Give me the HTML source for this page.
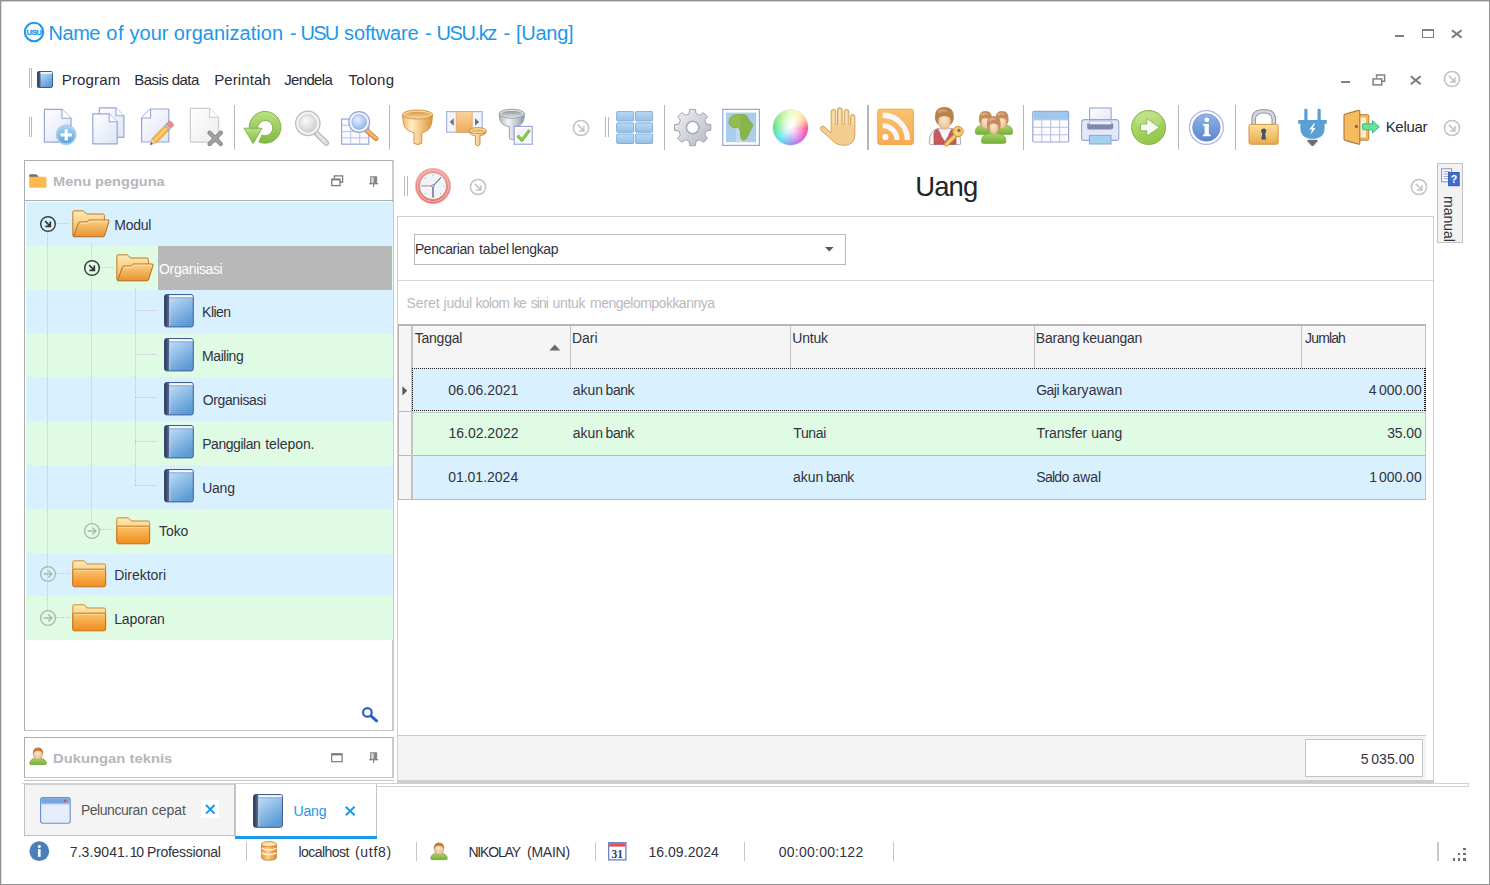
<!DOCTYPE html>
<html><head><meta charset="utf-8"><title>USU</title><style>
html,body{margin:0;padding:0}
body{width:1490px;height:885px;position:relative;overflow:hidden;background:#fff;font-family:"Liberation Sans",sans-serif}
body>div,body>svg,body>span{position:absolute;box-sizing:border-box}
.t{white-space:pre;line-height:1}
svg{overflow:visible}
</style></head>
<body>
<div style="left:0px;top:0px;width:1490px;height:885px;border:1px solid #929292;"></div>
<div style="left:1px;top:1px;width:1488px;height:1px;background:rgba(140,140,140,0.4);"></div>
<div style="left:1px;top:1px;width:1px;height:883px;background:rgba(140,140,140,0.25);"></div>
<span class="t" style="left:48.60px;top:22.60px;font-size:20px;color:#1c97ea;letter-spacing:-0.503px;">Name</span>
<span class="t" style="left:106.20px;top:22.60px;font-size:20px;color:#1c97ea;letter-spacing:0.792px;">of</span>
<span class="t" style="left:129.60px;top:22.60px;font-size:20px;color:#1c97ea;letter-spacing:-0.033px;">your</span>
<span class="t" style="left:173.80px;top:22.60px;font-size:20px;color:#1c97ea;letter-spacing:0.027px;">organization</span>
<span class="t" style="left:289.90px;top:22.60px;font-size:20px;color:#1c97ea;">-</span>
<span class="t" style="left:300.40px;top:22.60px;font-size:20px;color:#1c97ea;letter-spacing:-1.653px;">USU</span>
<span class="t" style="left:344.10px;top:22.60px;font-size:20px;color:#1c97ea;letter-spacing:-0.144px;">software</span>
<span class="t" style="left:424.90px;top:22.60px;font-size:20px;color:#1c97ea;">-</span>
<span class="t" style="left:436.40px;top:22.60px;font-size:20px;color:#1c97ea;letter-spacing:-1.382px;">USU.kz</span>
<span class="t" style="left:503.40px;top:22.60px;font-size:20px;color:#1c97ea;">-</span>
<span class="t" style="left:516.00px;top:22.60px;font-size:20px;color:#1c97ea;letter-spacing:-0.262px;">[Uang]</span>
<svg style="left:23px;top:21.4px;" width="22" height="22" viewBox="0 0 22 22"><circle cx="11" cy="11" r="9.2" fill="none" stroke="#1c97ea" stroke-width="2.1"/><text x="11" y="13.6" font-family="Liberation Sans" font-weight="bold" font-size="7.8" fill="#1c97ea" stroke="#1c97ea" stroke-width="0.3" text-anchor="middle" letter-spacing="-0.5">USU</text></svg>
<div style="left:1395px;top:35px;width:9px;height:2.4px;background:#808080;"></div>
<div style="left:1422.4px;top:28.8px;width:12px;height:9px;border:1px solid #808080;border-top-width:2.4px;"></div>
<svg style="left:1451px;top:28.5px;" width="12" height="10" viewBox="0 0 12 10"><path d="M1 1.2 L10.6 8.6 M10.6 1.2 L1 8.6" stroke="#7c7c7c" stroke-width="2" fill="none"/></svg>
<div style="left:29px;top:68px;width:1px;height:20px;background:#b9b9b9;"></div>
<div style="left:31.3px;top:68px;width:1px;height:20px;background:#b9b9b9;"></div>
<span class="t" style="left:61.80px;top:71.70px;font-size:15px;color:#2a2a33;letter-spacing:0.157px;">Program</span>
<span class="t" style="left:134.20px;top:71.70px;font-size:15px;color:#2a2a33;letter-spacing:-0.550px;">Basis data</span>
<span class="t" style="left:214.20px;top:71.70px;font-size:15px;color:#2a2a33;letter-spacing:0.085px;">Perintah</span>
<span class="t" style="left:284.17px;top:71.70px;font-size:15px;color:#2a2a33;letter-spacing:-0.646px;">Jendela</span>
<span class="t" style="left:348.60px;top:71.70px;font-size:15px;color:#2a2a33;letter-spacing:0.240px;">Tolong</span>
<div style="left:1341.4px;top:81px;width:8.6px;height:2.4px;background:#808080;"></div>
<svg style="left:1372px;top:73.5px;" width="14" height="12" viewBox="0 0 14 12"><path d="M4.6 3.8 V1.1 H12.6 V7.2 H9.8" fill="none" stroke="#808080" stroke-width="1.5"/><rect x="1.1" y="4.9" width="8.6" height="6" fill="none" stroke="#808080" stroke-width="1.5"/></svg>
<svg style="left:1410px;top:74.5px;" width="12" height="10" viewBox="0 0 12 10"><path d="M0.8 1.2 L10.6 9.2 M10.6 1.2 L0.8 9.2" stroke="#7c7c7c" stroke-width="2" fill="none"/></svg>
<svg style="left:1442.7px;top:70.2px;" width="18" height="18" viewBox="0 0 18 18"><circle cx="9" cy="9" r="7.6" fill="#fff" stroke="#c2c2c2" stroke-width="1.5"/><path d="M5.8 5.8 L11.6 11.6 M11.9 7 V11.9 H7" fill="none" stroke="#c2c2c2" stroke-width="1.5"/></svg>
<svg style="left:1442.7px;top:118.8px;" width="18" height="18" viewBox="0 0 18 18"><circle cx="9" cy="9" r="7.6" fill="#fff" stroke="#c2c2c2" stroke-width="1.5"/><path d="M5.8 5.8 L11.6 11.6 M11.9 7 V11.9 H7" fill="none" stroke="#c2c2c2" stroke-width="1.5"/></svg>
<svg style="left:571.8px;top:118.6px;" width="18" height="18" viewBox="0 0 18 18"><circle cx="9" cy="9" r="7.6" fill="#fff" stroke="#c2c2c2" stroke-width="1.5"/><path d="M5.8 5.8 L11.6 11.6 M11.9 7 V11.9 H7" fill="none" stroke="#c2c2c2" stroke-width="1.5"/></svg>
<svg style="left:468.9px;top:177.8px;" width="18" height="18" viewBox="0 0 18 18"><circle cx="9" cy="9" r="7.6" fill="#fff" stroke="#c2c2c2" stroke-width="1.5"/><path d="M5.8 5.8 L11.6 11.6 M11.9 7 V11.9 H7" fill="none" stroke="#c2c2c2" stroke-width="1.5"/></svg>
<svg style="left:1409.5px;top:177.8px;" width="18" height="18" viewBox="0 0 18 18"><circle cx="9" cy="9" r="7.6" fill="#fff" stroke="#c2c2c2" stroke-width="1.5"/><path d="M5.8 5.8 L11.6 11.6 M11.9 7 V11.9 H7" fill="none" stroke="#c2c2c2" stroke-width="1.5"/></svg>
<div style="left:29px;top:117px;width:1px;height:20px;background:#b9b9b9;"></div>
<div style="left:31.3px;top:117px;width:1px;height:20px;background:#b9b9b9;"></div>
<div style="left:605.3px;top:117px;width:1px;height:20px;background:#b9b9b9;"></div>
<div style="left:607.6px;top:117px;width:1px;height:20px;background:#b9b9b9;"></div>
<div style="left:233.6px;top:105.2px;width:1.3px;height:44.4px;background:#b6b6b6;"></div>
<div style="left:388.7px;top:105.2px;width:1.3px;height:44.4px;background:#b6b6b6;"></div>
<div style="left:663.8px;top:105.2px;width:1.3px;height:44.4px;background:#b6b6b6;"></div>
<div style="left:867.3px;top:105.2px;width:1.3px;height:44.4px;background:#b6b6b6;"></div>
<div style="left:1022.6px;top:105.2px;width:1.3px;height:44.4px;background:#b6b6b6;"></div>
<div style="left:1177.5px;top:105.2px;width:1.3px;height:44.4px;background:#b6b6b6;"></div>
<div style="left:1234.9px;top:105.2px;width:1.3px;height:44.4px;background:#b6b6b6;"></div>
<span class="t" style="left:1385.70px;top:119.20px;font-size:15px;color:#2a2a33;letter-spacing:-0.325px;">Keluar</span>
<div style="left:24px;top:160px;width:370.4px;height:571px;background:#fff;border:1px solid #adadad;border-right:2px solid #cbcbcb;border-bottom-color:#c6c6c6;"></div>
<div style="left:25px;top:200px;width:368px;height:1.2px;background:#adadad;"></div>
<span class="t" style="left:53.45px;top:174.65px;font-size:13.5px;color:#b6b6ba;font-weight:bold;transform:scaleX(1.0794);transform-origin:0 0;">Menu pengguna</span>
<div style="left:26px;top:202.2px;width:366.5px;height:44.099999999999994px;background:#d9f1fe;"></div>
<div style="left:26px;top:246.0px;width:366.5px;height:44.099999999999994px;background:#dffbe4;"></div>
<div style="left:26px;top:289.79999999999995px;width:366.5px;height:44.099999999999994px;background:#d9f1fe;"></div>
<div style="left:26px;top:333.59999999999997px;width:366.5px;height:44.099999999999994px;background:#dffbe4;"></div>
<div style="left:26px;top:377.4px;width:366.5px;height:44.099999999999994px;background:#d9f1fe;"></div>
<div style="left:26px;top:421.2px;width:366.5px;height:44.099999999999994px;background:#dffbe4;"></div>
<div style="left:26px;top:464.99999999999994px;width:366.5px;height:44.099999999999994px;background:#d9f1fe;"></div>
<div style="left:26px;top:508.79999999999995px;width:366.5px;height:44.099999999999994px;background:#dffbe4;"></div>
<div style="left:26px;top:552.5999999999999px;width:366.5px;height:44.099999999999994px;background:#d9f1fe;"></div>
<div style="left:26px;top:596.4px;width:366.5px;height:44.099999999999994px;background:#dffbe4;"></div>
<div style="left:157.7px;top:246.0px;width:234.8px;height:43.8px;background:#b8b8b8;"></div>
<span class="t" style="left:114.28px;top:217.80px;font-size:14px;color:#32323e;letter-spacing:-0.290px;">Modul</span>
<span class="t" style="left:159.07px;top:261.60px;font-size:14px;color:#fff;letter-spacing:-0.365px;">Organisasi</span>
<span class="t" style="left:202.08px;top:305.40px;font-size:14px;color:#32323e;letter-spacing:-0.532px;">Klien</span>
<span class="t" style="left:202.08px;top:349.20px;font-size:14px;color:#32323e;letter-spacing:-0.448px;">Mailing</span>
<span class="t" style="left:202.67px;top:393.00px;font-size:14px;color:#32323e;letter-spacing:-0.365px;">Organisasi</span>
<span class="t" style="left:202.25px;top:480.60px;font-size:14px;color:#32323e;letter-spacing:-0.266px;">Uang</span>
<span class="t" style="left:159.02px;top:524.40px;font-size:14px;color:#32323e;letter-spacing:-0.068px;">Toko</span>
<span class="t" style="left:114.18px;top:568.20px;font-size:14px;color:#32323e;letter-spacing:-0.032px;">Direktori</span>
<span class="t" style="left:114.18px;top:612.00px;font-size:14px;color:#32323e;letter-spacing:-0.110px;">Laporan</span>
<span class="t" style="left:202.18px;top:436.80px;font-size:14px;color:#32323e;letter-spacing:-0.450px;">Panggilan</span>
<span class="t" style="left:265.19px;top:436.80px;font-size:14px;color:#32323e;letter-spacing:-0.072px;">telepon.</span>
<div style="left:47.3px;top:232.2px;width:0px;height:378.2px;border-left:1px dotted #c4c6cf;"></div>
<div style="left:91.1px;top:243.0px;width:0px;height:17.0px;border-left:1px dotted #c4c6cf;"></div>
<div style="left:91.1px;top:276.0px;width:0px;height:246.79999999999995px;border-left:1px dotted #c4c6cf;"></div>
<div style="left:134.9px;top:287.79999999999995px;width:0px;height:197.7px;border-left:1px dotted #c4c6cf;"></div>
<div style="left:56px;top:222.7px;width:13px;height:0px;border-top:1px dotted #c4c6cf;"></div>
<div style="left:100px;top:266.5px;width:13px;height:0px;border-top:1px dotted #c4c6cf;"></div>
<div style="left:135.4px;top:309.79999999999995px;width:21.599999999999994px;height:0px;border-top:1px dotted #c4c6cf;"></div>
<div style="left:135.4px;top:353.59999999999997px;width:21.599999999999994px;height:0px;border-top:1px dotted #c4c6cf;"></div>
<div style="left:135.4px;top:397.4px;width:21.599999999999994px;height:0px;border-top:1px dotted #c4c6cf;"></div>
<div style="left:135.4px;top:441.2px;width:21.599999999999994px;height:0px;border-top:1px dotted #c4c6cf;"></div>
<div style="left:135.4px;top:484.99999999999994px;width:21.599999999999994px;height:0px;border-top:1px dotted #c4c6cf;"></div>
<div style="left:100px;top:529.3px;width:14px;height:0px;border-top:1px dotted #c4c6cf;"></div>
<div style="left:56px;top:573.0999999999999px;width:14px;height:0px;border-top:1px dotted #c4c6cf;"></div>
<div style="left:56px;top:616.9px;width:14px;height:0px;border-top:1px dotted #c4c6cf;"></div>
<svg style="left:39px;top:215.1px;" width="18" height="18" viewBox="0 0 18 18"><circle cx="9" cy="9" r="7.3" fill="none" stroke="#3a4242" stroke-width="1.5"/><path d="M6.2 6.2 L11 11 M11.3 6.4 V11.3 H6.4" fill="none" stroke="#2f3535" stroke-width="1.7"/></svg>
<svg style="left:82.8px;top:259.0px;" width="18" height="18" viewBox="0 0 18 18"><circle cx="9" cy="9" r="7.3" fill="none" stroke="#3a4242" stroke-width="1.5"/><path d="M6.2 6.2 L11 11 M11.3 6.4 V11.3 H6.4" fill="none" stroke="#2f3535" stroke-width="1.7"/></svg>
<svg style="left:82.8px;top:521.5999999999999px;" width="18" height="18" viewBox="0 0 18 18"><circle cx="9" cy="9" r="7.4" fill="none" stroke="#a9b7b0" stroke-width="1.3"/><path d="M4.6 9 H12.6 M9.4 5.6 L12.8 9 L9.4 12.4" fill="none" stroke="#a9b7b0" stroke-width="1.4"/></svg>
<svg style="left:39px;top:565.3999999999999px;" width="18" height="18" viewBox="0 0 18 18"><circle cx="9" cy="9" r="7.4" fill="none" stroke="#a9b7b0" stroke-width="1.3"/><path d="M4.6 9 H12.6 M9.4 5.6 L12.8 9 L9.4 12.4" fill="none" stroke="#a9b7b0" stroke-width="1.4"/></svg>
<svg style="left:38.8px;top:609.1999999999999px;" width="18" height="18" viewBox="0 0 18 18"><circle cx="9" cy="9" r="7.4" fill="none" stroke="#a9b7b0" stroke-width="1.3"/><path d="M4.6 9 H12.6 M9.4 5.6 L12.8 9 L9.4 12.4" fill="none" stroke="#a9b7b0" stroke-width="1.4"/></svg>
<div style="left:24px;top:737px;width:370.4px;height:40.5px;background:#fff;border:1px solid #adadad;border-right:2px solid #cbcbcb;border-bottom-color:#c6c6c6;"></div>
<div style="left:24px;top:779.5px;width:370px;height:1.2px;background:#c4c4c4;"></div>
<span class="t" style="left:53.44px;top:751.55px;font-size:13.5px;color:#b6b6ba;font-weight:bold;transform:scaleX(1.0967);transform-origin:0 0;">Dukungan teknis</span>
<div style="left:404.2px;top:176px;width:1px;height:20px;background:#b9b9b9;"></div>
<div style="left:406.5px;top:176px;width:1px;height:20px;background:#b9b9b9;"></div>
<span class="t" style="left:915.24px;top:172.55px;font-size:27.5px;color:#22242a;letter-spacing:-0.927px;">Uang</span>
<div style="left:396.6px;top:216px;width:1037.6px;height:568px;border:1.6px solid #cfcfcf;border-bottom:none;"></div>
<div style="left:398px;top:279.6px;width:1034.5px;height:1.4px;background:#d6d6d6;"></div>
<div style="left:414px;top:234px;width:432px;height:30.6px;background:#fff;border:1px solid #b9b9b9;"></div>
<span class="t" style="left:414.88px;top:241.50px;font-size:14px;color:#32323e;letter-spacing:-0.409px;">Pencarian</span>
<span class="t" style="left:478.89px;top:241.50px;font-size:14px;color:#32323e;letter-spacing:-0.048px;">tabel</span>
<span class="t" style="left:511.49px;top:241.50px;font-size:14px;color:#32323e;letter-spacing:-0.322px;">lengkap</span>
<svg style="left:825px;top:247.3px;" width="9" height="5" viewBox="0 0 9 5"><path d="M0 0 H8.6 L4.3 4.6 Z" fill="#55585c"/></svg>
<span class="t" style="left:406.47px;top:296.30px;font-size:14px;color:#b9b9bf;letter-spacing:-0.099px;">Seret</span>
<span class="t" style="left:443.55px;top:296.30px;font-size:14px;color:#b9b9bf;letter-spacing:-0.223px;">judul</span>
<span class="t" style="left:475.49px;top:296.30px;font-size:14px;color:#b9b9bf;letter-spacing:-0.743px;">kolom</span>
<span class="t" style="left:513.19px;top:296.30px;font-size:14px;color:#b9b9bf;letter-spacing:-1.140px;">ke</span>
<span class="t" style="left:530.68px;top:296.30px;font-size:14px;color:#b9b9bf;letter-spacing:-0.926px;">sini</span>
<span class="t" style="left:552.39px;top:296.30px;font-size:14px;color:#b9b9bf;letter-spacing:-0.255px;">untuk</span>
<span class="t" style="left:589.99px;top:296.30px;font-size:14px;color:#b9b9bf;letter-spacing:-0.504px;">mengelompokkannya</span>
<div style="left:397.6px;top:324px;width:1028.0px;height:2px;background:#b6b6b6;"></div>
<div style="left:397.6px;top:326px;width:1028.0px;height:42px;background:#f5f5f5;"></div>
<div style="left:397.6px;top:368px;width:14.4px;height:131.5px;background:#f5f5f5;"></div>
<div style="left:411.4px;top:326px;width:1.2px;height:42px;background:#c4c4c4;"></div>
<div style="left:569.9px;top:326px;width:1.2px;height:42px;background:#c4c4c4;"></div>
<div style="left:789.9px;top:326px;width:1.2px;height:42px;background:#c4c4c4;"></div>
<div style="left:1033.6000000000001px;top:326px;width:1.2px;height:42px;background:#c4c4c4;"></div>
<div style="left:1301.2px;top:326px;width:1.2px;height:42px;background:#c4c4c4;"></div>
<div style="left:1424.6000000000001px;top:326px;width:1.2px;height:42px;background:#c4c4c4;"></div>
<div style="left:397.6px;top:324px;width:1.2px;height:175.5px;background:#b6b6b6;"></div>
<div style="left:412px;top:326px;width:0.1px;height:0.1px;"></div>
<div style="left:412.6px;top:368.4px;width:1012.9999999999999px;height:43px;background:#d9f1fe;"></div>
<div style="left:412.6px;top:411.4px;width:1012.9999999999999px;height:44px;background:#dffbe4;"></div>
<div style="left:412.6px;top:455.8px;width:1012.9999999999999px;height:43.4px;background:#d9f1fe;"></div>
<div style="left:397.6px;top:454.8px;width:1028.0px;height:1.2px;background:#b9b9b9;"></div>
<div style="left:397.6px;top:498.6px;width:1028.0px;height:1.2px;background:#b9b9b9;"></div>
<div style="left:397.6px;top:410.6px;width:14.4px;height:1.2px;background:#b9b9b9;"></div>
<div style="left:411.4px;top:368px;width:1.2px;height:131px;background:#c4c4c4;"></div>
<div style="left:1425px;top:368px;width:1.2px;height:131px;background:#c4c4c4;"></div>
<div style="left:412px;top:368.2px;width:1014px;height:1.3px;background:repeating-linear-gradient(90deg,#221c28 0,#221c28 1px,transparent 1px,transparent 2px);"></div>
<div style="left:412px;top:410.1px;width:1014px;height:1.3px;background:repeating-linear-gradient(90deg,#221c28 0,#221c28 1px,transparent 1px,transparent 2px);"></div>
<div style="left:412.2px;top:368px;width:1.3px;height:44px;background:repeating-linear-gradient(180deg,#221c28 0,#221c28 1px,transparent 1px,transparent 2px);"></div>
<div style="left:1424.4px;top:368px;width:1.3px;height:44px;background:repeating-linear-gradient(180deg,#221c28 0,#221c28 1px,transparent 1px,transparent 2px);"></div>
<div style="left:412.6px;top:411.5px;width:1013px;height:1px;background:rgba(150,155,150,0.45);"></div>
<svg style="left:402px;top:386px;" width="6" height="10" viewBox="0 0 6 10"><path d="M0.4 0.2 L5.2 4.8 L0.4 9.4 Z" fill="#55585c"/></svg>
<svg style="left:548.6px;top:343.6px;" width="12" height="7" viewBox="0 0 12 7"><path d="M0.4 6.4 L5.8 0.4 L11.2 6.4 Z" fill="#6a6a6a"/></svg>
<span class="t" style="left:414.72px;top:331.30px;font-size:14px;color:#32323e;letter-spacing:-0.236px;">Tanggal</span>
<span class="t" style="left:572.08px;top:331.30px;font-size:14px;color:#32323e;letter-spacing:-0.064px;">Dari</span>
<span class="t" style="left:792.25px;top:331.30px;font-size:14px;color:#32323e;letter-spacing:-0.199px;">Untuk</span>
<span class="t" style="left:1305.09px;top:331.30px;font-size:14px;color:#32323e;letter-spacing:-0.868px;">Jumlah</span>
<span class="t" style="left:1035.78px;top:331.30px;font-size:14px;color:#32323e;letter-spacing:-0.206px;">Barang</span>
<span class="t" style="left:1082.59px;top:331.30px;font-size:14px;color:#32323e;letter-spacing:-0.250px;">keuangan</span>
<span class="t" style="left:448.14px;top:382.70px;font-size:14px;color:#32323e;letter-spacing:0.024px;">06.06.2021</span>
<span class="t" style="left:448.45px;top:426.40px;font-size:14px;color:#32323e;">16.02.2022</span>
<span class="t" style="left:448.14px;top:470.30px;font-size:14px;color:#32323e;">01.01.2024</span>
<span class="t" style="left:572.64px;top:382.70px;font-size:14px;color:#32323e;letter-spacing:-0.013px;">akun</span>
<span class="t" style="left:605.59px;top:382.70px;font-size:14px;color:#32323e;letter-spacing:-0.457px;">bank</span>
<span class="t" style="left:572.64px;top:426.40px;font-size:14px;color:#32323e;letter-spacing:-0.013px;">akun</span>
<span class="t" style="left:605.59px;top:426.40px;font-size:14px;color:#32323e;letter-spacing:-0.457px;">bank</span>
<span class="t" style="left:793.22px;top:426.40px;font-size:14px;color:#32323e;letter-spacing:-0.341px;">Tunai</span>
<span class="t" style="left:792.94px;top:470.30px;font-size:14px;color:#32323e;letter-spacing:-0.013px;">akun</span>
<span class="t" style="left:825.89px;top:470.30px;font-size:14px;color:#32323e;letter-spacing:-0.657px;">bank</span>
<span class="t" style="left:1036.20px;top:382.70px;font-size:14px;color:#32323e;letter-spacing:-0.516px;">Gaji</span>
<span class="t" style="left:1062.09px;top:382.70px;font-size:14px;color:#32323e;letter-spacing:0.028px;">karyawan</span>
<span class="t" style="left:1036.62px;top:426.40px;font-size:14px;color:#32323e;letter-spacing:-0.143px;">Transfer</span>
<span class="t" style="left:1091.29px;top:426.40px;font-size:14px;color:#32323e;letter-spacing:-0.080px;">uang</span>
<span class="t" style="left:1036.27px;top:470.30px;font-size:14px;color:#32323e;letter-spacing:-0.721px;">Saldo</span>
<span class="t" style="left:1072.44px;top:470.30px;font-size:14px;color:#32323e;letter-spacing:-0.034px;">awal</span>
<span class="t" style="left:1368.72px;top:382.70px;font-size:14px;color:#32323e;">4</span>
<span class="t" style="left:1378.94px;top:382.70px;font-size:14px;color:#32323e;letter-spacing:-0.019px;">000.00</span>
<span class="t" style="left:1387.14px;top:426.40px;font-size:14px;color:#32323e;letter-spacing:-0.115px;">35.00</span>
<span class="t" style="left:1369.35px;top:470.30px;font-size:14px;color:#32323e;">1</span>
<span class="t" style="left:1378.94px;top:470.30px;font-size:14px;color:#32323e;letter-spacing:-0.019px;">000.00</span>
<div style="left:398px;top:735.2px;width:1027.6px;height:1.2px;background:#c9c9c9;"></div>
<div style="left:398px;top:736.4px;width:1027.6px;height:44px;background:#f4f4f4;"></div>
<div style="left:1305px;top:739px;width:117.6px;height:38px;background:#fff;border:1px solid #c4c4c4;"></div>
<span class="t" style="left:1360.84px;top:751.60px;font-size:14px;color:#32323e;">5</span>
<span class="t" style="left:1371.24px;top:751.60px;font-size:14px;color:#32323e;letter-spacing:0.041px;">035.00</span>
<div style="left:398px;top:780.4px;width:1036px;height:2.4px;background:#cdcdcd;"></div>
<div style="left:22px;top:782.8px;width:1446.6px;height:1.2px;background:#d0d0d0;"></div>
<div style="left:377px;top:786.2px;width:1091.6px;height:1.2px;background:#d0d0d0;"></div>
<div style="left:1467.6px;top:782.8px;width:1.2px;height:4.6px;background:#d0d0d0;"></div>
<div style="left:1437.4px;top:163px;width:25.4px;height:80px;background:#f2f2f2;border:1px solid #c2c2c2;"></div>
<span class="t" style="left:1443px;top:196px;font-size:14px;color:#32323e;transform:rotate(90deg);transform-origin:0 0;margin-left:13px;">manual</span>
<div style="left:24px;top:783.6px;width:211.4px;height:52px;background:#f4f4f4;border:1px solid #c0c0c0;border-top-color:#d0d0d0;"></div>
<div style="left:235px;top:783.6px;width:142px;height:52px;background:#fff;border:1px solid #c4c4c4;border-top:none;border-bottom:none;"></div>
<div style="left:235px;top:835.7px;width:142px;height:3.1px;background:#1c97ea;"></div>
<span class="t" style="left:80.88px;top:802.80px;font-size:14px;color:#55555a;letter-spacing:-0.445px;">Peluncuran</span>
<span class="t" style="left:151.64px;top:802.80px;font-size:14px;color:#55555a;">cepat</span>
<div style="left:200.7px;top:800px;width:18.2px;height:18px;background:#fff;"></div>
<svg style="left:204.5px;top:803.5px;" width="11" height="11" viewBox="0 0 11 11"><path d="M1 1 L9.6 9.6 M9.6 1 L1 9.6" stroke="#1c97ea" stroke-width="2" fill="none"/></svg>
<span class="t" style="left:293.55px;top:804.20px;font-size:14px;color:#1c97ea;letter-spacing:-0.200px;">Uang</span>
<svg style="left:345.4px;top:806px;" width="11" height="11" viewBox="0 0 11 11"><path d="M0.8 0.8 L9.6 9.2 M9.6 0.8 L0.8 9.2" stroke="#1c97ea" stroke-width="2" fill="none"/></svg>
<span class="t" style="left:69.80px;top:845.40px;font-size:14px;color:#32323e;letter-spacing:0.072px;">7.3.9041.</span>
<span class="t" style="left:129.75px;top:845.40px;font-size:14px;color:#32323e;letter-spacing:-1.205px;">10</span>
<span class="t" style="left:147.08px;top:845.40px;font-size:14px;color:#32323e;letter-spacing:-0.298px;">Professional</span>
<span class="t" style="left:298.39px;top:845.40px;font-size:14px;color:#32323e;letter-spacing:-0.520px;">localhost</span>
<span class="t" style="left:354.96px;top:845.40px;font-size:14px;color:#32323e;letter-spacing:0.710px;">(utf8)</span>
<span class="t" style="left:468.38px;top:845.40px;font-size:14px;color:#32323e;letter-spacing:-1.174px;">NIKOLAY</span>
<span class="t" style="left:526.96px;top:845.40px;font-size:14px;color:#32323e;letter-spacing:-0.226px;">(MAIN)</span>
<span class="t" style="left:648.45px;top:845.40px;font-size:14px;color:#32323e;letter-spacing:0.044px;">16.09.2024</span>
<span class="t" style="left:778.84px;top:845.40px;font-size:14px;color:#32323e;letter-spacing:0.236px;">00:00:00:122</span>
<div style="left:246.0px;top:842.4px;width:1.2px;height:19px;background:#c6c6c6;"></div>
<div style="left:416.2px;top:842.4px;width:1.2px;height:19px;background:#c6c6c6;"></div>
<div style="left:595.0px;top:842.4px;width:1.2px;height:19px;background:#c6c6c6;"></div>
<div style="left:743.8px;top:842.4px;width:1.2px;height:19px;background:#c6c6c6;"></div>
<div style="left:892.5px;top:842.4px;width:1.2px;height:19px;background:#c6c6c6;"></div>
<div style="left:1437.4px;top:842.4px;width:1.2px;height:19px;background:#c6c6c6;"></div>
<div style="left:1463.4px;top:848.1999999999999px;width:2.2px;height:2.2px;background:#6e6e6e;"></div>
<div style="left:1458.3000000000002px;top:853.3px;width:2.2px;height:2.2px;background:#6e6e6e;"></div>
<div style="left:1463.4px;top:853.3px;width:2.2px;height:2.2px;background:#6e6e6e;"></div>
<div style="left:1453.2px;top:858.4px;width:2.2px;height:2.2px;background:#6e6e6e;"></div>
<div style="left:1458.3000000000002px;top:858.4px;width:2.2px;height:2.2px;background:#6e6e6e;"></div>
<div style="left:1463.4px;top:858.4px;width:2.2px;height:2.2px;background:#6e6e6e;"></div>
<svg width="0" height="0" style="left:0;top:0"><defs>
<linearGradient id="gPage" x1="0" y1="0" x2="1" y2="1"><stop offset="0" stop-color="#ffffff"/><stop offset="1" stop-color="#dde4f6"/></linearGradient>
<linearGradient id="gPageG" x1="0" y1="0" x2="1" y2="1"><stop offset="0" stop-color="#ffffff"/><stop offset="1" stop-color="#ececec"/></linearGradient>
<linearGradient id="gBlueBtn" x1="0" y1="0" x2="0" y2="1"><stop offset="0" stop-color="#a9d3f3"/><stop offset="1" stop-color="#5c9fd8"/></linearGradient>
<linearGradient id="gGreen" x1="0" y1="0" x2="0" y2="1"><stop offset="0" stop-color="#bbe084"/><stop offset="1" stop-color="#82b942"/></linearGradient>
<linearGradient id="gGold" x1="0" y1="0" x2="1" y2="0"><stop offset="0" stop-color="#efb866"/><stop offset="0.3" stop-color="#fdedc8"/><stop offset="0.65" stop-color="#f3c277"/><stop offset="1" stop-color="#d8953f"/></linearGradient><linearGradient id="gGoldIn" x1="0" y1="0" x2="0" y2="1"><stop offset="0" stop-color="#d89a4c"/><stop offset="1" stop-color="#f6d79c"/></linearGradient><linearGradient id="gSilverIn" x1="0" y1="0" x2="0" y2="1"><stop offset="0" stop-color="#8f969f"/><stop offset="1" stop-color="#dfe3e8"/></linearGradient><linearGradient id="gRss" x1="0" y1="0" x2="0" y2="1"><stop offset="0" stop-color="#fbc272"/><stop offset="1" stop-color="#f7ab52"/></linearGradient><linearGradient id="gGo" x1="0" y1="0" x2="0.4" y2="1"><stop offset="0" stop-color="#bfe380"/><stop offset="1" stop-color="#93c84c"/></linearGradient><linearGradient id="gCol" x1="0" y1="0" x2="0" y2="1"><stop offset="0" stop-color="#f9d29e"/><stop offset="1" stop-color="#f0aa58"/></linearGradient>
<linearGradient id="gSilver" x1="0" y1="0" x2="1" y2="0"><stop offset="0" stop-color="#aeb4bc"/><stop offset="0.35" stop-color="#f2f4f6"/><stop offset="0.7" stop-color="#c3c8cf"/><stop offset="1" stop-color="#8e959e"/></linearGradient>
<linearGradient id="gCell" x1="0" y1="0" x2="0" y2="1"><stop offset="0" stop-color="#b9daf3"/><stop offset="1" stop-color="#93bfe6"/></linearGradient>
<linearGradient id="gGear" x1="0" y1="0" x2="1" y2="1"><stop offset="0" stop-color="#f1f2f5"/><stop offset="1" stop-color="#b4b8c2"/></linearGradient>
<linearGradient id="gFoldB" x1="0" y1="0" x2="0" y2="1"><stop offset="0" stop-color="#fdeab4"/><stop offset="1" stop-color="#f2b557"/></linearGradient>
<linearGradient id="gFoldF" x1="0" y1="0" x2="0" y2="1"><stop offset="0" stop-color="#fad289"/><stop offset="1" stop-color="#e9912c"/></linearGradient>
<linearGradient id="gFoldC" x1="0" y1="0" x2="0" y2="1"><stop offset="0" stop-color="#fcc46c"/><stop offset="1" stop-color="#f08c1e"/></linearGradient>
<linearGradient id="gBook" x1="0" y1="0" x2="0.6" y2="1"><stop offset="0" stop-color="#cfe8fb"/><stop offset="1" stop-color="#5d9bd6"/></linearGradient>
<linearGradient id="gSpine" x1="0" y1="0" x2="1" y2="0"><stop offset="0" stop-color="#2a3552"/><stop offset="1" stop-color="#5f7098"/></linearGradient>
<linearGradient id="gOrange" x1="0" y1="0" x2="0" y2="1"><stop offset="0" stop-color="#fcc272"/><stop offset="1" stop-color="#f39a38"/></linearGradient>
<linearGradient id="gLock" x1="0" y1="0" x2="0" y2="1"><stop offset="0" stop-color="#fbe09a"/><stop offset="1" stop-color="#e8ab4c"/></linearGradient>
<linearGradient id="gInfo" x1="0" y1="0" x2="0" y2="1"><stop offset="0" stop-color="#8fb4e8"/><stop offset="1" stop-color="#5b86cf"/></linearGradient>
<linearGradient id="gRed" x1="0" y1="0" x2="0" y2="1"><stop offset="0" stop-color="#f3a39c"/><stop offset="1" stop-color="#dc6a66"/></linearGradient>
<radialGradient id="gGlass" cx="0.4" cy="0.35" r="0.7"><stop offset="0" stop-color="#fafafa"/><stop offset="1" stop-color="#cfcfcf"/></radialGradient>
<radialGradient id="gGlassB" cx="0.4" cy="0.35" r="0.7"><stop offset="0" stop-color="#e6f0ff"/><stop offset="1" stop-color="#8db4ee"/></radialGradient>
<radialGradient id="gSkin" cx="0.45" cy="0.4" r="0.7"><stop offset="0" stop-color="#fbe6c8"/><stop offset="1" stop-color="#e4b98a"/></radialGradient>
<linearGradient id="gBody" x1="0" y1="0" x2="0" y2="1"><stop offset="0" stop-color="#a8d66a"/><stop offset="1" stop-color="#76b03a"/></linearGradient>
</defs></svg>
<svg style="left:0;top:0" width="1490" height="160" viewBox="0 0 1490 160"><path d="M44.4 109.3 H62.0 L71.0 118.3 V142.1 H44.4 Z" fill="url(#gPage)" stroke="#98a5d8" stroke-width="1.2" stroke-linejoin="round"/><path d="M62.0 109.3 V118.3 H71.0" fill="#fff" stroke="#98a5d8" stroke-width="1.1" stroke-linejoin="round"/><circle cx="66.2" cy="134.8" r="10" fill="#b9d9f3" stroke="#8fbde6" stroke-width="0.7"/><circle cx="66.2" cy="134.8" r="8.8" fill="url(#gBlueBtn)"/><path d="M60.4 134.8 H72 M66.2 129 V140.6" stroke="#fff" stroke-width="3.2"/><path d="M60.4 134.8 H72 M66.2 129 V140.6" stroke="#5f9ad2" stroke-width="4.4" opacity="0.25"/><path d="M60.9 134.8 H71.5 M66.2 129.5 V140.1" stroke="#fff" stroke-width="2.8"/><path d="M99.3 107.8 H115.9 L123.9 115.8 V137.4 H99.3 Z" fill="url(#gPage)" stroke="#98a5d8" stroke-width="1.2" stroke-linejoin="round"/><path d="M115.9 107.8 V115.8 H123.9" fill="#fff" stroke="#98a5d8" stroke-width="1.1" stroke-linejoin="round"/><path d="M92.8 113.8 H109.19999999999999 L117.19999999999999 121.8 V143.8 H92.8 Z" fill="url(#gPage)" stroke="#98a5d8" stroke-width="1.2" stroke-linejoin="round"/><path d="M109.19999999999999 113.8 V121.8 H117.19999999999999" fill="#fff" stroke="#98a5d8" stroke-width="1.1" stroke-linejoin="round"/><path d="M150.6 109 H168.79999999999998 V142 H141.6 V118 Z" fill="url(#gPage)" stroke="#98a5d8" stroke-width="1.2" stroke-linejoin="round"/><path d="M150.6 109 V118 H141.6" fill="#fff" stroke="#98a5d8" stroke-width="1.1" stroke-linejoin="round"/><g transform="translate(150.2,144.8) rotate(-45.5)"><path d="M0 0 L6.2 -3.1 V3.1 Z" fill="#ecd0a4" stroke="#b58a5a" stroke-width="0.5"/><path d="M0 0 L2.4 -1.2 V1.2 Z" fill="#4e5660"/><rect x="6.2" y="-3.1" width="17.4" height="6.2" fill="#f6b443" stroke="#cf8a2a" stroke-width="0.5"/><rect x="6.2" y="-1" width="17.4" height="2" fill="#fbd27c"/><rect x="23.6" y="-3.2" width="3" height="6.4" fill="#b6bcc8" stroke="#8a92a2" stroke-width="0.4"/><path d="M26.6 -3.2 H29.6 Q31.2 -3.2 31.2 -1.6 V1.6 Q31.2 3.2 29.6 3.2 H26.6 Z" fill="#ee8d8a" stroke="#c96864" stroke-width="0.4"/></g><path d="M190.4 108.3 H209.6 L218.6 117.3 V142.1 H190.4 Z" fill="url(#gPageG)" stroke="#cdcdcd" stroke-width="1.2" stroke-linejoin="round"/><path d="M209.6 108.3 V117.3 H218.6" fill="#fff" stroke="#cdcdcd" stroke-width="1.1" stroke-linejoin="round"/><path d="M209.6 132.8 L220.8 144 M220.8 132.8 L209.6 144" stroke="#858585" stroke-width="4.4" stroke-linecap="round"/><path d="M209.8 133 L220.6 143.8 M220.6 133 L209.8 143.8" stroke="#a2a2a2" stroke-width="2.6" stroke-linecap="round"/><path d="M249.2 128.4 A15.9 15.9 0 1 1 258.8 141.9 L262 135 A7.6 7.6 0 1 0 257.6 128.4 Z" fill="url(#gGreen)" stroke="#7cae48" stroke-width="0.9" stroke-linejoin="round"/><path d="M244 128.2 H262 L253.1 143.6 Z" fill="url(#gGreen)" stroke="#7cae48" stroke-width="0.9" stroke-linejoin="round"/><path d="M315.6 132.4 L326.2 143" stroke="#b3b3b3" stroke-width="5.6" stroke-linecap="round"/><path d="M315.6 132.4 L326.2 143" stroke="#e3e3e3" stroke-width="3.4" stroke-linecap="round"/><circle cx="307.8" cy="123.4" r="12.2" fill="#f1f1f1" stroke="#bcbcbc" stroke-width="1.2"/><circle cx="307.8" cy="123.4" r="8.6" fill="url(#gGlass)" stroke="#c6c6c6" stroke-width="0.8"/><rect x="341.6" y="119" width="27.2" height="25.2" fill="#fbfbff" stroke="#98a5d8" stroke-width="1.2"/><path d="M341.6 125.3 H368.8" stroke="#b9c1e6" stroke-width="1"/><path d="M341.6 131.6 H368.8" stroke="#b9c1e6" stroke-width="1"/><path d="M341.6 137.9 H368.8" stroke="#b9c1e6" stroke-width="1"/><path d="M350.7 119 V144.2" stroke="#b9c1e6" stroke-width="1"/><path d="M359.7 119 V144.2" stroke="#b9c1e6" stroke-width="1"/><path d="M366.8 130.6 L376 138.6" stroke="#c98a44" stroke-width="5" stroke-linecap="round"/><path d="M367.2 130.6 L375.8 138.2" stroke="#f2b468" stroke-width="3" stroke-linecap="round"/><circle cx="359.2" cy="122" r="10.4" fill="#f3f5fd" stroke="#98a5d8" stroke-width="1.2"/><circle cx="359.2" cy="122" r="7.4" fill="url(#gGlassB)" stroke="#9ab4e6" stroke-width="0.8"/><path d="M402.6 114.5 C402.90000000000003 128.98 406.93 130.79 414 132.6 V143.4 Q417.9 145.6 421.8 143.4 V132.6 C428.37 130.79 432.09999999999997 128.98 432.4 114.5 Z" fill="url(#gGold)" stroke="#c98a3c" stroke-width="0.9"/><ellipse cx="417.5" cy="114.5" rx="14.899999999999977" ry="4.5" fill="#f7dca4" stroke="#c98a3c" stroke-width="0.9"/><ellipse cx="417.5" cy="115.0" rx="13.099999999999977" ry="3.2" fill="url(#gGoldIn)"/><rect x="446.6" y="111.6" width="35.6" height="20.6" fill="#f2f4fc" stroke="#a9b3e0" stroke-width="1.2"/><rect x="456.2" y="111.6" width="16" height="20.6" fill="url(#gCol)" stroke="#e6a85c" stroke-width="0.8"/><path d="M453.8 118.2 V125.8 L449.6 122 Z M475 118.2 V125.8 L479.2 122 Z" fill="#6f7480"/><path d="M469.2 130.6 C469.5 134.60 471.56 135.10 475.4 135.6 V144.6 Q477.7 146.79999999999998 480 144.6 V135.6 C483.84 135.10 485.9 134.60 486.2 130.6 Z" fill="url(#gGold)" stroke="#c98a3c" stroke-width="0.9"/><ellipse cx="477.7" cy="130.6" rx="8.5" ry="3.0" fill="#f7dca4" stroke="#c98a3c" stroke-width="0.9"/><ellipse cx="477.7" cy="131.1" rx="6.7" ry="1.7" fill="url(#gGoldIn)"/><path d="M499.2 113.7 C499.5 124.02 503.08 125.31 509.4 126.6 V138.6 Q512.3 140.79999999999998 515.2 138.6 V126.6 C520.90 125.31 524.1 124.02 524.4 113.7 Z" fill="url(#gSilver)" stroke="#8f96a0" stroke-width="0.9"/><ellipse cx="511.79999999999995" cy="113.7" rx="12.599999999999994" ry="4.5" fill="#d9dde2" stroke="#8f96a0" stroke-width="0.9"/><ellipse cx="511.79999999999995" cy="114.2" rx="10.799999999999994" ry="3.2" fill="url(#gSilverIn)"/><rect x="514.2" y="126.4" width="18" height="17.8" fill="#fff" stroke="#98a5d8" stroke-width="1.2"/><rect x="516" y="128.2" width="14.4" height="14.2" fill="#f3f5fc"/><path d="M517.6 135.4 L522 140.2 L529.6 130.2" fill="none" stroke="#6aaa32" stroke-width="3" stroke-linejoin="round"/><path d="M517.8 135.4 L522 139.8 L529.4 130.4" fill="none" stroke="#9fd05a" stroke-width="1.4"/><rect x="616.7" y="111.6" width="17" height="9.4" rx="0.8" fill="url(#gCell)" stroke="#86addc" stroke-width="1"/><rect x="616.7" y="122.9" width="17" height="9.4" rx="0.8" fill="url(#gCell)" stroke="#86addc" stroke-width="1"/><rect x="616.7" y="134.1" width="17" height="9.4" rx="0.8" fill="url(#gCell)" stroke="#86addc" stroke-width="1"/><rect x="635.6" y="111.6" width="17" height="9.4" rx="0.8" fill="url(#gCell)" stroke="#86addc" stroke-width="1"/><rect x="635.6" y="122.9" width="17" height="9.4" rx="0.8" fill="url(#gCell)" stroke="#86addc" stroke-width="1"/><rect x="635.6" y="134.1" width="17" height="9.4" rx="0.8" fill="url(#gCell)" stroke="#86addc" stroke-width="1"/><path d="M689.72 109.33 L695.48 109.33 L696.02 113.72 L699.92 115.33 L703.42 112.61 L707.49 116.68 L704.77 120.18 L706.38 124.08 L710.77 124.62 L710.77 130.38 L706.38 130.92 L704.77 134.82 L707.49 138.32 L703.42 142.39 L699.92 139.67 L696.02 141.28 L695.48 145.67 L689.72 145.67 L689.18 141.28 L685.28 139.67 L681.78 142.39 L677.71 138.32 L680.43 134.82 L678.82 130.92 L674.43 130.38 L674.43 124.62 L678.82 124.08 L680.43 120.18 L677.71 116.68 L681.78 112.61 L685.28 115.33 L689.18 113.72 Z" fill="url(#gGear)" stroke="#9ea3ad" stroke-width="1" stroke-linejoin="round"/><circle cx="692.6" cy="127.5" r="6.2" fill="#fff" stroke="#a6abb5" stroke-width="1.6"/><rect x="722.8" y="109.4" width="36.6" height="36" fill="#fff" stroke="#98a5d8" stroke-width="1.2"/><rect x="726" y="112.6" width="30.2" height="29.6" fill="#a9cdea"/><rect x="735.6" y="112.6" width="10.4" height="29.6" fill="#c4ddf2" opacity="0.8"/><path d="M729 121 Q730 115.8 736 114.6 L744.6 114.2 Q748 116 748.6 119.4 L752.8 124.8 Q752.4 128.4 749.8 131 Q748 137.6 744.6 140.2 Q741.2 141 740.6 136.4 Q741 131 738.6 127.6 Q733.8 128.6 730.8 126.2 Q728.6 124 729 121 Z" fill="#93bd52" stroke="#7aa63c" stroke-width="0.7"/><path d="M740.4 114.4 L744.6 114.2 Q748 116 748.6 119.4 L752.8 124.8 Q752.4 128.4 749.8 131 Q748 137.6 744.6 140.2 Q741.2 141 740.6 136.4 Z" fill="#7fae44" opacity="0.55"/></svg>
<div style="left:772.8px;top:110px;width:34.8px;height:34.8px;border-radius:50%;background:radial-gradient(circle at 50% 48%,rgba(255,255,255,1) 0%,rgba(255,255,255,0.7) 25%,rgba(255,255,255,0) 68%),conic-gradient(from 0deg,#e6ffc0,#fff4ae 9%,#ffc494 17%,#f2508e 26%,#e45ee0 38%,#8f9cf2 50%,#4fe6f2 62%,#5ae27a 76%,#a4f088 89%,#e6ffc0);box-shadow:0 0 0 0.5px rgba(150,160,190,0.45)"></div>
<svg style="left:0;top:0" width="1490" height="160" viewBox="0 0 1490 160"><path d="M831.1 133 V111.6 Q831.1 109.4 833.45 109.4 Q835.8 109.4 835.8 111.6 V124 H837.5 V110 Q837.5 107.7 839.85 107.7 Q842.2 107.7 842.2 110 V124 H844.2 V111.6 Q844.2 109.4 846.55 109.4 Q848.9 109.4 848.9 111.6 V124.4 H850.6 V116.6 Q850.6 114.4 852.75 114.4 Q854.9 114.4 854.9 116.6 V134 Q854.9 145.3 844 145.3 Q836 145.3 832 140 L821 130.4 Q819.4 128.4 821 126.8 Q822.8 125.4 824.6 126.8 L831.1 133 Z" fill="#f3cd8e" stroke="#d3a55e" stroke-width="1" stroke-linejoin="round"/><path d="M833.4 112 V123 M839.8 110.4 V123 M846.5 112 V123 M852.7 117 V124" stroke="#f9e3b8" stroke-width="1.6" stroke-linecap="round"/><rect x="877.8" y="109.2" width="35.6" height="35.4" rx="2.4" fill="url(#gRss)" stroke="#f2a449" stroke-width="1"/><circle cx="885.4" cy="137" r="3.1" fill="#fdfcfa"/><path d="M882.7 125.7 A14.3 14.3 0 0 1 897 140" fill="none" stroke="#f8f6f6" stroke-width="5"/><path d="M882.7 115.25 A24.75 24.75 0 0 1 907.45 140" fill="none" stroke="#f8f6f6" stroke-width="5.3"/><path d="M929.2 143.4 Q929.4 130.2 937.4 128.6 L944.6 127.6 L952 128.6 Q960.6 130.2 960.8 143.4 Q960.8 144.6 959.4 144.6 H930.6 Q929.2 144.6 929.2 143.4 Z" fill="#f6f6f8" stroke="#a2a2ac" stroke-width="0.9"/><path d="M934 144.2 V133 Q934 130.2 937.8 129.2 L944.8 141.6 L951.8 129.2 Q956 130.2 956 133 V144.2 Z" fill="#c9595a" stroke="#a8403e" stroke-width="0.6"/><path d="M939.6 128.4 L944.8 133.6 L950 128.4 L948 136 L944.8 141 L941.6 136 Z" fill="#fff" stroke="#c8c8d4" stroke-width="0.5"/><path d="M935.10 119.32 Q933.98 107.00 944.40 107.00 Q954.82 107.00 953.70 119.32 Q952.21 124.47 949.98 124.92 L938.82 124.92 Q936.59 124.47 935.10 119.32 Z" fill="#b9814f"/><ellipse cx="942.54" cy="111.48" rx="4.84" ry="2.24" fill="#dba676" opacity="0.8"/><ellipse cx="944.40" cy="121.34" rx="6.14" ry="8.06" fill="url(#gSkin)" stroke="#cf9e70" stroke-width="0.5"/><path d="M937.70 118.65 Q942.54 113.72 951.10 118.20 Q949.98 111.48 944.40 111.48 Q938.82 111.48 937.70 118.65 Z" fill="#b9814f"/><path d="M955.4 135.4 L946.4 144.2" stroke="#c98e38" stroke-width="4.6" stroke-linecap="round"/><path d="M955.4 135.4 L946.4 144.2" stroke="#f6cc74" stroke-width="2.8" stroke-linecap="round"/><circle cx="958" cy="131.6" r="5.2" fill="#f4c868" stroke="#cf9438" stroke-width="1"/><circle cx="956.6" cy="133" r="1" fill="#fbe7b2"/><circle cx="959" cy="130.4" r="1.6" fill="#8c6c52"/><path d="M975.2 132.4 Q975.2 125 984.1 125 Q993 125 993 132.4 Q993 134.4 990 134.4 H978.2 Q975.2 134.4 975.2 132.4 Z" fill="url(#gBody)" stroke="#7bb042" stroke-width="0.8"/><path d="M995 132.4 Q995 125 1003.9 125 Q1012.8 125 1012.8 132.4 Q1012.8 134.4 1009.8 134.4 H998 Q995 134.4 995 132.4 Z" fill="url(#gBody)" stroke="#7bb042" stroke-width="0.8"/><path d="M978.90 120.68 Q978.11 111.00 985.50 111.00 Q992.89 111.00 992.10 120.68 Q991.04 124.73 989.46 125.08 L981.54 125.08 Q979.96 124.73 978.90 120.68 Z" fill="#c48c5c"/><ellipse cx="984.18" cy="114.52" rx="3.43" ry="1.76" fill="#e2b488" opacity="0.8"/><ellipse cx="985.50" cy="122.26" rx="4.36" ry="6.34" fill="url(#gSkin)" stroke="#cf9e70" stroke-width="0.5"/><path d="M980.75 120.15 Q984.18 116.28 990.25 119.80 Q989.46 114.52 985.50 114.52 Q981.54 114.52 980.75 120.15 Z" fill="#c48c5c"/><path d="M995.40 120.68 Q994.61 111.00 1002.00 111.00 Q1009.39 111.00 1008.60 120.68 Q1007.54 124.73 1005.96 125.08 L998.04 125.08 Q996.46 124.73 995.40 120.68 Z" fill="#c48c5c"/><ellipse cx="1000.68" cy="114.52" rx="3.43" ry="1.76" fill="#e2b488" opacity="0.8"/><ellipse cx="1002.00" cy="122.26" rx="4.36" ry="6.34" fill="url(#gSkin)" stroke="#cf9e70" stroke-width="0.5"/><path d="M997.25 120.15 Q1000.68 116.28 1006.75 119.80 Q1005.96 114.52 1002.00 114.52 Q998.04 114.52 997.25 120.15 Z" fill="#c48c5c"/><path d="M981.4 141.4 Q981.4 133 993.7 133 Q1006 133 1006 141.4 Q1006 143.4 1003 143.4 H984.4 Q981.4 143.4 981.4 141.4 Z" fill="url(#gBody)" stroke="#7bb042" stroke-width="0.8"/><path d="M987.00 126.12 Q986.18 116.00 993.80 116.00 Q1001.42 116.00 1000.60 126.12 Q999.51 130.35 997.88 130.72 L989.72 130.72 Q988.09 130.35 987.00 126.12 Z" fill="#c48c5c"/><ellipse cx="992.44" cy="119.68" rx="3.54" ry="1.84" fill="#e2b488" opacity="0.8"/><ellipse cx="993.80" cy="127.78" rx="4.49" ry="6.62" fill="url(#gSkin)" stroke="#cf9e70" stroke-width="0.5"/><path d="M988.90 125.57 Q992.44 121.52 998.70 125.20 Q997.88 119.68 993.80 119.68 Q989.72 119.68 988.90 125.57 Z" fill="#c48c5c"/><rect x="1032.8" y="111.4" width="35.8" height="30.6" rx="1.2" fill="#fcfcff" stroke="#98a5d8" stroke-width="1.2"/><path d="M1033.4 112 H1068 V119.6 H1033.4 Z" fill="#9fc7ec"/><path d="M1041.8 111.4 V142" stroke="#b3bde6" stroke-width="1"/><path d="M1050.7 111.4 V142" stroke="#b3bde6" stroke-width="1"/><path d="M1059.6 111.4 V142" stroke="#b3bde6" stroke-width="1"/><path d="M1032.8 119.8 H1068.6" stroke="#b3bde6" stroke-width="1"/><path d="M1032.8 127.3 H1068.6" stroke="#b3bde6" stroke-width="1"/><path d="M1032.8 134.8 H1068.6" stroke="#b3bde6" stroke-width="1"/><rect x="1089.6" y="108" width="21.6" height="16" fill="url(#gPage)" stroke="#98a5d8" stroke-width="1.1"/><path d="M1084.4 119.6 H1116 Q1118.8 119.6 1118.8 122.6 V138 Q1118.8 140.4 1116.4 140.4 H1084 Q1081.6 140.4 1081.6 138 V122.6 Q1081.6 119.6 1084.4 119.6 Z" fill="#e2e8f6" stroke="#98a5d8" stroke-width="1.1"/><path d="M1087.2 123.4 H1113.2 V127.6 Q1113.2 129.6 1111 129.6 H1089.4 Q1087.2 129.6 1087.2 127.6 Z" fill="#808aa8"/><rect x="1089.6" y="121" width="21.6" height="3.4" fill="#eef1fa" stroke="#98a5d8" stroke-width="0.6"/><rect x="1089.4" y="135.4" width="21.6" height="8.6" fill="#a6d0f0" stroke="#86a6dc" stroke-width="1"/><circle cx="1148.6" cy="127.5" r="17" fill="url(#gGo)" stroke="#80b840" stroke-width="1"/><ellipse cx="1148.6" cy="120" rx="13" ry="8" fill="#fff" opacity="0.16"/><path d="M1140.5 124 H1146.8 V118.6 L1159.6 127.4 L1146.8 136 V130.8 H1140.5 Z" fill="#f6faf2" stroke="#7fb040" stroke-width="0.8" stroke-linejoin="round"/><circle cx="1206.4" cy="127.5" r="16.9" fill="#fff" stroke="#b3b8e2" stroke-width="1.3"/><circle cx="1206.4" cy="127.5" r="13.8" fill="url(#gInfo)" stroke="#5f86c8" stroke-width="0.6"/><circle cx="1206.8" cy="119.8" r="2.4" fill="#fff"/><path d="M1203 124 H1208.8 V133.6 Q1208.8 134.6 1210.6 134.8 V136.2 H1202.8 V134.8 Q1204.6 134.6 1204.6 133.6 V126.4 Q1204.6 125.6 1203 125.4 Z" fill="#fff"/><path d="M1253.6 125 V119.4 Q1253.6 111.2 1263.7 111.2 Q1273.8 111.2 1273.8 119.4 V125" fill="none" stroke="#8f979f" stroke-width="4.6"/><path d="M1253.6 125 V119.4 Q1253.6 111.2 1263.7 111.2 Q1273.8 111.2 1273.8 119.4 V125" fill="none" stroke="#d3d8dd" stroke-width="2.4"/><rect x="1249" y="124.4" width="29.2" height="19.8" rx="1.6" fill="url(#gLock)" stroke="#d19544" stroke-width="1"/><path d="M1263.7 128.4 Q1266.3 128.4 1266.3 131 Q1266.3 132.6 1265.1 133.4 L1266.1 139.6 H1261.3 L1262.3 133.4 Q1261.1 132.6 1261.1 131 Q1261.1 128.4 1263.7 128.4 Z" fill="#4a5166"/><path d="M1304.3 109.6 Q1304.3 108.8 1305.9 108.8 Q1307.5 108.8 1307.5 109.6 V120.4 H1304.3 Z M1317.5 109.6 Q1317.5 108.8 1319.1 108.8 Q1320.7 108.8 1320.7 109.6 V120.4 H1317.5 Z" fill="#5c9fd2"/><path d="M1298.2 120 H1326.8 V123.8 H1324.6 V128 Q1324.6 138.8 1312.5 138.8 Q1300.4 138.8 1300.4 128 V123.8 H1298.2 Z" fill="#5c9fd2"/><path d="M1313.8 123.4 L1309.4 129.6 H1312 L1310.4 134.8 L1315.6 128 H1312.8 L1315 123.4 Z" fill="#fff"/><path d="M1307.6 139.8 H1317.4 V142.6 H1315.6 V144.4 H1313.8 V146 H1311.2 V144.4 H1309.4 V142.6 H1307.6 Z" fill="#6b6f74"/><rect x="1357" y="114.6" width="11.8" height="25.6" rx="1" fill="#f2b65a" stroke="#b8863c" stroke-width="1"/><rect x="1360" y="117.4" width="6" height="20" fill="#fbeccb"/><path d="M1345.2 114 L1358.6 110.4 Q1359.8 110.2 1359.8 111.4 V143 Q1359.8 144.4 1358.6 144.2 L1345.2 140.4 Q1344 140 1344 138.8 V115.6 Q1344 114.4 1345.2 114 Z" fill="#f5bb60" stroke="#a97a38" stroke-width="1.1" stroke-linejoin="round"/><circle cx="1356.4" cy="126.4" r="1.6" fill="#8a6a3c"/><path d="M1363.6 123.8 H1372.4 V120.6 L1379.4 126.8 L1372.4 133 V129.8 H1363.6 Q1362.6 129.8 1362.6 128.8 V124.8 Q1362.6 123.8 1363.6 123.8 Z" fill="#62e3a0" stroke="#3dba7a" stroke-width="1" stroke-linejoin="round"/></svg>
<svg style="left:163.8px;top:293.99999999999994px" width="29.8" height="33.4" viewBox="0 0 29.8 33.4"><rect x="0.5" y="0.5" width="28.8" height="32.4" rx="2.2" fill="url(#gBook)" stroke="#3f5d92" stroke-width="1"/><path d="M2.4 0.6 H5.4 V32.8 H2.4 Q0.6 32.8 0.6 31.0 V2.4 Q0.6 0.6 2.4 0.6 Z" fill="url(#gSpine)"/><path d="M5.4 1.2 H27.400000000000002 Q28.6 1.2 28.6 2.4 V3.6 H5.4 Z" fill="#f4f8fd"/><path d="M5.4 3.8 H28.8" stroke="#7f9cc8" stroke-width="0.8"/><path d="M5.800000000000001 4.4 V32.199999999999996" stroke="#dbeefc" stroke-width="0.8" opacity="0.8"/></svg>
<svg style="left:163.8px;top:337.79999999999995px" width="29.8" height="33.4" viewBox="0 0 29.8 33.4"><rect x="0.5" y="0.5" width="28.8" height="32.4" rx="2.2" fill="url(#gBook)" stroke="#3f5d92" stroke-width="1"/><path d="M2.4 0.6 H5.4 V32.8 H2.4 Q0.6 32.8 0.6 31.0 V2.4 Q0.6 0.6 2.4 0.6 Z" fill="url(#gSpine)"/><path d="M5.4 1.2 H27.400000000000002 Q28.6 1.2 28.6 2.4 V3.6 H5.4 Z" fill="#f4f8fd"/><path d="M5.4 3.8 H28.8" stroke="#7f9cc8" stroke-width="0.8"/><path d="M5.800000000000001 4.4 V32.199999999999996" stroke="#dbeefc" stroke-width="0.8" opacity="0.8"/></svg>
<svg style="left:163.8px;top:381.59999999999997px" width="29.8" height="33.4" viewBox="0 0 29.8 33.4"><rect x="0.5" y="0.5" width="28.8" height="32.4" rx="2.2" fill="url(#gBook)" stroke="#3f5d92" stroke-width="1"/><path d="M2.4 0.6 H5.4 V32.8 H2.4 Q0.6 32.8 0.6 31.0 V2.4 Q0.6 0.6 2.4 0.6 Z" fill="url(#gSpine)"/><path d="M5.4 1.2 H27.400000000000002 Q28.6 1.2 28.6 2.4 V3.6 H5.4 Z" fill="#f4f8fd"/><path d="M5.4 3.8 H28.8" stroke="#7f9cc8" stroke-width="0.8"/><path d="M5.800000000000001 4.4 V32.199999999999996" stroke="#dbeefc" stroke-width="0.8" opacity="0.8"/></svg>
<svg style="left:163.8px;top:425.4px" width="29.8" height="33.4" viewBox="0 0 29.8 33.4"><rect x="0.5" y="0.5" width="28.8" height="32.4" rx="2.2" fill="url(#gBook)" stroke="#3f5d92" stroke-width="1"/><path d="M2.4 0.6 H5.4 V32.8 H2.4 Q0.6 32.8 0.6 31.0 V2.4 Q0.6 0.6 2.4 0.6 Z" fill="url(#gSpine)"/><path d="M5.4 1.2 H27.400000000000002 Q28.6 1.2 28.6 2.4 V3.6 H5.4 Z" fill="#f4f8fd"/><path d="M5.4 3.8 H28.8" stroke="#7f9cc8" stroke-width="0.8"/><path d="M5.800000000000001 4.4 V32.199999999999996" stroke="#dbeefc" stroke-width="0.8" opacity="0.8"/></svg>
<svg style="left:163.8px;top:469.19999999999993px" width="29.8" height="33.4" viewBox="0 0 29.8 33.4"><rect x="0.5" y="0.5" width="28.8" height="32.4" rx="2.2" fill="url(#gBook)" stroke="#3f5d92" stroke-width="1"/><path d="M2.4 0.6 H5.4 V32.8 H2.4 Q0.6 32.8 0.6 31.0 V2.4 Q0.6 0.6 2.4 0.6 Z" fill="url(#gSpine)"/><path d="M5.4 1.2 H27.400000000000002 Q28.6 1.2 28.6 2.4 V3.6 H5.4 Z" fill="#f4f8fd"/><path d="M5.4 3.8 H28.8" stroke="#7f9cc8" stroke-width="0.8"/><path d="M5.800000000000001 4.4 V32.199999999999996" stroke="#dbeefc" stroke-width="0.8" opacity="0.8"/></svg>
<svg style="left:252.6px;top:793.6px" width="30" height="33.8" viewBox="0 0 30 33.8"><rect x="0.5" y="0.5" width="29" height="32.8" rx="2.2" fill="url(#gBook)" stroke="#3f5d92" stroke-width="1"/><path d="M2.4 0.6 H5.4 V33.199999999999996 H2.4 Q0.6 33.199999999999996 0.6 31.4 V2.4 Q0.6 0.6 2.4 0.6 Z" fill="url(#gSpine)"/><path d="M5.4 1.2 H27.6 Q28.8 1.2 28.8 2.4 V3.6 H5.4 Z" fill="#f4f8fd"/><path d="M5.4 3.8 H29" stroke="#7f9cc8" stroke-width="0.8"/><path d="M5.800000000000001 4.4 V32.599999999999994" stroke="#dbeefc" stroke-width="0.8" opacity="0.8"/></svg>
<svg style="left:37.2px;top:70.6px" width="16" height="17" viewBox="0 0 16 17"><rect x="0.5" y="0.5" width="15" height="16" rx="1.4" fill="url(#gBook)" stroke="#3f5d92" stroke-width="1"/><rect x="0.6" y="0.6" width="3" height="15.8" fill="url(#gSpine)"/><rect x="3.6" y="1" width="11.6" height="1.8" fill="#eef5fc"/></svg>
<svg style="left:72.2px;top:210.2px" width="38" height="28" viewBox="0 0 38 28"><path d="M0.8 25.6 V2.2 Q0.8 0.8 2.2 0.8 H10.6 Q11.8 0.8 12.6 1.8 L14.6 4 H31 Q32.4 4 32.4 5.4 V25.6 Z" fill="url(#gFoldB)" stroke="#bf7826" stroke-width="1" stroke-linejoin="round"/><path d="M1.4 26.6 L6.4 13.2 Q6.8 12 8.2 12 H14.8 L16.8 10 H36 Q37.6 10 37 11.6 L32.6 25.6 Q32.2 26.8 31 26.8 H2 Q1 26.8 1.4 26.6 Z" fill="url(#gFoldF)" stroke="#b56c1e" stroke-width="1" stroke-linejoin="round"/><path d="M8.6 13.2 H15.4 L17.4 11.2 H35.4" fill="none" stroke="#fde5b4" stroke-width="1"/></svg>
<svg style="left:116px;top:254.0px" width="38" height="28" viewBox="0 0 38 28"><path d="M0.8 25.6 V2.2 Q0.8 0.8 2.2 0.8 H10.6 Q11.8 0.8 12.6 1.8 L14.6 4 H31 Q32.4 4 32.4 5.4 V25.6 Z" fill="url(#gFoldB)" stroke="#bf7826" stroke-width="1" stroke-linejoin="round"/><path d="M1.4 26.6 L6.4 13.2 Q6.8 12 8.2 12 H14.8 L16.8 10 H36 Q37.6 10 37 11.6 L32.6 25.6 Q32.2 26.8 31 26.8 H2 Q1 26.8 1.4 26.6 Z" fill="url(#gFoldF)" stroke="#b56c1e" stroke-width="1" stroke-linejoin="round"/><path d="M8.6 13.2 H15.4 L17.4 11.2 H35.4" fill="none" stroke="#fde5b4" stroke-width="1"/></svg>
<svg style="left:116px;top:516.5999999999999px" width="35" height="28" viewBox="0 0 35 28"><path d="M0.8 25 V2.2 Q0.8 0.8 2.2 0.8 H11.4 Q12.6 0.8 13.4 1.8 L15.2 4 H32 Q33.6 4 33.6 5.6 V25 Z" fill="url(#gFoldB)" stroke="#cf8630" stroke-width="1" stroke-linejoin="round"/><path d="M2.2 9.2 H32.2 Q33.6 9.2 33.6 10.6 V25 Q33.6 26.8 32 26.8 H2.4 Q0.8 26.8 0.8 25 V10.6 Q0.8 9.2 2.2 9.2 Z" fill="url(#gFoldC)" stroke="#c9701c" stroke-width="1" stroke-linejoin="round"/><path d="M2 10.4 H32.4" stroke="#fdd9a0" stroke-width="1"/></svg>
<svg style="left:72.2px;top:560.3999999999999px" width="35" height="28" viewBox="0 0 35 28"><path d="M0.8 25 V2.2 Q0.8 0.8 2.2 0.8 H11.4 Q12.6 0.8 13.4 1.8 L15.2 4 H32 Q33.6 4 33.6 5.6 V25 Z" fill="url(#gFoldB)" stroke="#cf8630" stroke-width="1" stroke-linejoin="round"/><path d="M2.2 9.2 H32.2 Q33.6 9.2 33.6 10.6 V25 Q33.6 26.8 32 26.8 H2.4 Q0.8 26.8 0.8 25 V10.6 Q0.8 9.2 2.2 9.2 Z" fill="url(#gFoldC)" stroke="#c9701c" stroke-width="1" stroke-linejoin="round"/><path d="M2 10.4 H32.4" stroke="#fdd9a0" stroke-width="1"/></svg>
<svg style="left:72.2px;top:604.1999999999999px" width="35" height="28" viewBox="0 0 35 28"><path d="M0.8 25 V2.2 Q0.8 0.8 2.2 0.8 H11.4 Q12.6 0.8 13.4 1.8 L15.2 4 H32 Q33.6 4 33.6 5.6 V25 Z" fill="url(#gFoldB)" stroke="#cf8630" stroke-width="1" stroke-linejoin="round"/><path d="M2.2 9.2 H32.2 Q33.6 9.2 33.6 10.6 V25 Q33.6 26.8 32 26.8 H2.4 Q0.8 26.8 0.8 25 V10.6 Q0.8 9.2 2.2 9.2 Z" fill="url(#gFoldC)" stroke="#c9701c" stroke-width="1" stroke-linejoin="round"/><path d="M2 10.4 H32.4" stroke="#fdd9a0" stroke-width="1"/></svg>
<svg style="left:28.6px;top:173.6px" width="18" height="14" viewBox="0 0 18 14"><path d="M0.2 3 V1.6 Q0.2 0.2 1.8 0.2 H6.4 Q7.6 0.2 8.4 1.2 L9.8 3 Z" fill="#6f6f6f"/><path d="M0.2 2.8 H16.2 Q17.4 2.8 17.4 4 V13.8 H0.2 Z" fill="#fdb94c"/></svg>
<svg style="left:330.6px;top:175px" width="13" height="12" viewBox="0 0 13 12"><path d="M3.4 3.4 V0.8 H11.6 V7 H9" fill="none" stroke="#7a7a7a" stroke-width="1.3"/><rect x="0.8" y="4.2" width="8.2" height="6.4" fill="none" stroke="#7a7a7a" stroke-width="1.3"/><path d="M0.8 4.6 H9" stroke="#7a7a7a" stroke-width="1.6"/></svg>
<svg style="left:368.5px;top:175.5px" width="10" height="12" viewBox="0 0 10 12"><path d="M1.6 0.8 H7.6 V7.4 H1.6 Z" fill="#dcdcdc" stroke="#868686" stroke-width="1.1"/><path d="M5.9 0.8 V7.4" stroke="#868686" stroke-width="2.4"/><path d="M0.1 7.7 H9.1" stroke="#868686" stroke-width="1.3"/><path d="M4.6 7.8 V10.9" stroke="#868686" stroke-width="1.2"/></svg>
<svg style="left:368.5px;top:751.6px" width="10" height="12" viewBox="0 0 10 12"><path d="M1.6 0.8 H7.6 V7.4 H1.6 Z" fill="#dcdcdc" stroke="#868686" stroke-width="1.1"/><path d="M5.9 0.8 V7.4" stroke="#868686" stroke-width="2.4"/><path d="M0.1 7.7 H9.1" stroke="#868686" stroke-width="1.3"/><path d="M4.6 7.8 V10.9" stroke="#868686" stroke-width="1.2"/></svg>
<svg style="left:331.4px;top:752.6px" width="12" height="10" viewBox="0 0 12 10"><rect x="0.7" y="0.9" width="10.4" height="7.8" fill="none" stroke="#7a7a7a" stroke-width="1.2"/><path d="M0.7 1.4 H11.1" stroke="#7a7a7a" stroke-width="2"/></svg>
<svg style="left:414px;top:166.6px" width="38" height="38" viewBox="0 0 38 38"><circle cx="19" cy="19" r="18" fill="#f3b5ae"/><circle cx="19" cy="19" r="17.2" fill="url(#gRed)"/><circle cx="19" cy="19" r="15.6" fill="none" stroke="#f6bdb6" stroke-width="1.2" opacity="0.8"/><circle cx="19" cy="19" r="13.6" fill="#f1f4fb" stroke="#e0867f" stroke-width="0.9"/><g fill="#8a94aa"><circle cx="19" cy="8" r="0.6"/><circle cx="30" cy="19" r="0.6"/><circle cx="19" cy="30" r="0.6"/><circle cx="11.2" cy="11.4" r="0.55"/><circle cx="26.6" cy="26.6" r="0.55"/><circle cx="11.4" cy="26.6" r="0.55"/></g><path d="M19 19 L7.2 18.8" stroke="#e2625e" stroke-width="0.9"/><path d="M19 19 L26.8 10.6" stroke="#66758c" stroke-width="1.1" stroke-linecap="round"/><path d="M19 19 V30" stroke="#66758c" stroke-width="1.5" stroke-linecap="round"/><circle cx="19" cy="19" r="1.4" fill="#e4eaf4" stroke="#66758c" stroke-width="0.7"/></svg>
<svg style="left:360.4px;top:705.1px" width="19" height="19" viewBox="0 0 19 19"><circle cx="7.4" cy="7.4" r="4.3" fill="#fff" stroke="#2a60c6" stroke-width="2.2"/><path d="M10.9 10.9 L16.6 15.8" stroke="#2a60c6" stroke-width="3" stroke-linecap="round"/></svg>
<svg style="left:29.4px;top:747px" width="18" height="18" viewBox="0 0 18 18"><path d="M0.8 16.6 Q0.8 11.2 9 11 Q17.2 11.2 17.2 16.6 Q17.2 17.6 16 17.6 H2 Q0.8 17.6 0.8 16.6 Z" fill="url(#gBody)" stroke="#6aa034" stroke-width="0.8"/><ellipse cx="9" cy="7.2" rx="4.6" ry="5.6" fill="url(#gSkin)" stroke="#c48f5e" stroke-width="0.6"/><path d="M4 7.6 Q3 0.6 9 0.4 Q15 0.6 14 7.6 Q13.2 3.8 9 3.8 Q4.8 3.8 4 7.6 Z" fill="#c57a3c"/></svg>
<svg style="left:430px;top:842px" width="18" height="18" viewBox="0 0 18 18"><path d="M0.8 16.6 Q0.8 11.2 9 11 Q17.2 11.2 17.2 16.6 Q17.2 17.6 16 17.6 H2 Q0.8 17.6 0.8 16.6 Z" fill="url(#gBody)" stroke="#6aa034" stroke-width="0.8"/><ellipse cx="9" cy="7.2" rx="4.6" ry="5.6" fill="url(#gSkin)" stroke="#c48f5e" stroke-width="0.6"/><path d="M4 7.6 Q3 0.6 9 0.4 Q15 0.6 14 7.6 Q13.2 3.8 9 3.8 Q4.8 3.8 4 7.6 Z" fill="#c57a3c"/></svg>
<svg style="left:39.8px;top:797.2px" width="31" height="27" viewBox="0 0 31 27"><rect x="0.6" y="0.6" width="29.6" height="25.6" rx="2.2" fill="#e6edfa" stroke="#6d8ccc" stroke-width="1.1"/><path d="M1.2 6.8 V2.6 Q1.2 1.2 2.6 1.2 H28.2 Q29.6 1.2 29.6 2.6 V6.8 Z" fill="#76a6e2"/><circle cx="25.2" cy="3.8" r="1.2" fill="#e8423a"/><path d="M1.2 7 H29.6" stroke="#a9c4ec" stroke-width="0.8"/></svg>
<svg style="left:28.6px;top:841px" width="21" height="21" viewBox="0 0 21 21"><circle cx="10.3" cy="10.2" r="9.9" fill="#4a7fba"/><circle cx="10.3" cy="5.6" r="1.5" fill="#fff"/><rect x="9" y="8.2" width="2.6" height="7.6" fill="#fff"/></svg>
<svg style="left:260.6px;top:840.6px" width="16" height="20" viewBox="0 0 16 20"><defs><linearGradient id="gDb" x1="0" y1="0" x2="1" y2="0"><stop offset="0" stop-color="#e9983a"/><stop offset="0.4" stop-color="#fbd28a"/><stop offset="1" stop-color="#df8a2a"/></linearGradient></defs><path d="M0.6 3.2 V16.6 Q0.6 19.2 8 19.2 Q15.4 19.2 15.4 16.6 V3.2 Z" fill="url(#gDb)" stroke="#c97a24" stroke-width="0.8"/><ellipse cx="8" cy="3.2" rx="7.4" ry="2.6" fill="#fce2b0" stroke="#c97a24" stroke-width="0.8"/><path d="M0.8 7.4 Q8 10.6 15.2 7.4 M0.8 12 Q8 15.2 15.2 12" fill="none" stroke="#fff3da" stroke-width="1.4"/></svg>
<svg style="left:608.4px;top:842.2px" width="19" height="19" viewBox="0 0 19 19"><rect x="0.7" y="0.7" width="17.2" height="17.2" fill="#fff" stroke="#5a78c4" stroke-width="1.2"/><rect x="1.2" y="1.2" width="16.2" height="3.4" fill="#e0524e"/><text x="9.3" y="15.6" font-family="Liberation Serif" font-weight="bold" font-size="11.5" fill="#2c3e6e" text-anchor="middle">31</text></svg>
<svg style="left:1441.4px;top:167.6px" width="19" height="19" viewBox="0 0 19 19"><rect x="0.6" y="0.8" width="10" height="13" fill="#fff" stroke="#7d90c8" stroke-width="1"/><path d="M2.4 3.6 H8.6 M2.4 6 H8.6 M2.4 8.4 H8.6 M2.4 10.8 H8.6" stroke="#8ea0d2" stroke-width="1"/><rect x="7.6" y="4.4" width="10.6" height="13.4" fill="#3d6fd0" stroke="#2c4fa0" stroke-width="0.8"/><text x="12.9" y="15" font-family="Liberation Sans" font-weight="bold" font-size="10.5" fill="#fff" text-anchor="middle">?</text></svg>
</body></html>
